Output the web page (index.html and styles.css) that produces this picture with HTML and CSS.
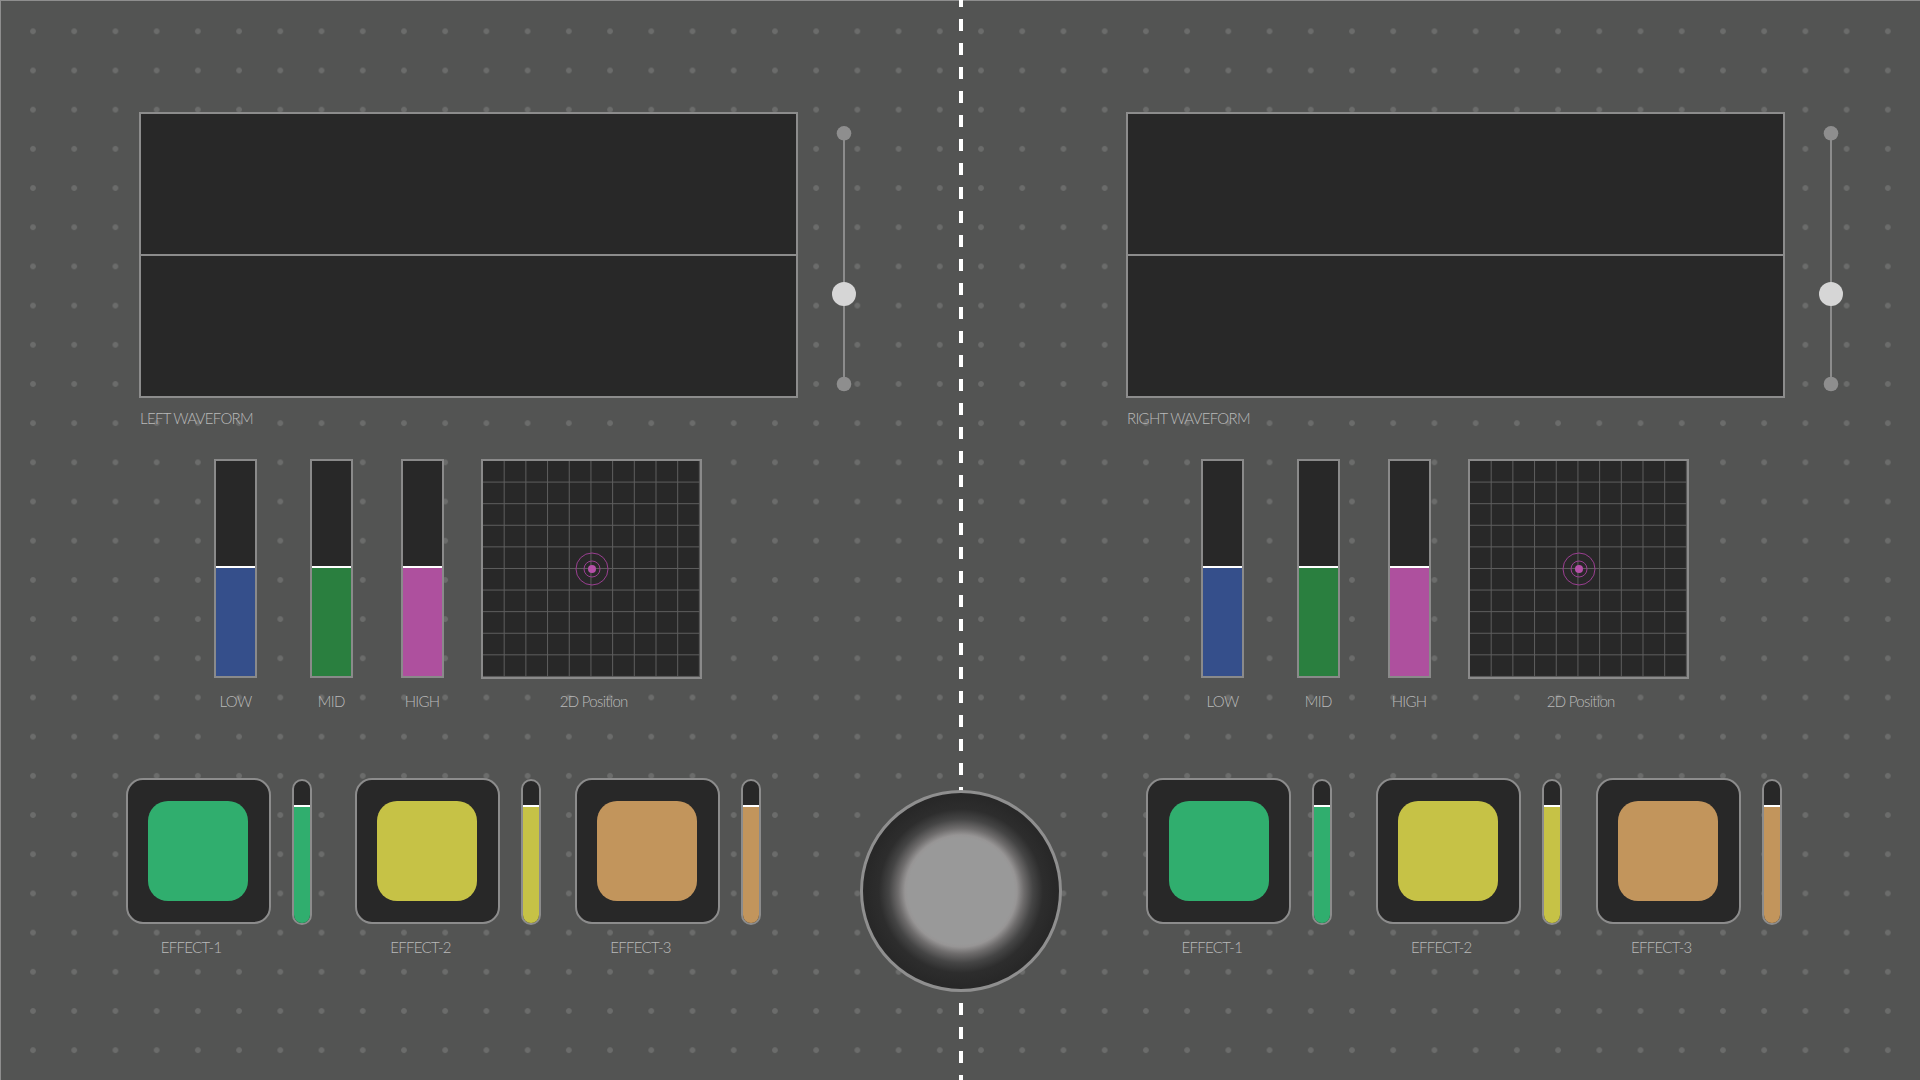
FILE: index.html
```html
<!DOCTYPE html>
<html lang="en">
<head>
<meta charset="utf-8">
<title>Mixer</title>
<link rel="stylesheet" href="styles.css">
</head>
<body>
<div class="stage">
  <div class="divider"></div>

  <div class="decks">
    <section class="deck">
      <div class="wave-row">
        <div class="wave"><div class="wave-half wave-top"></div><div class="wave-half"></div></div>
        <svg class="slider" width="24" height="286" viewBox="0 0 24 286">
          <line x1="12" y1="21" x2="12" y2="272" stroke="#8c8c8c" stroke-width="2"/>
          <circle cx="12" cy="21.3" r="7.3" fill="#8e8e8e"/>
          <circle cx="12" cy="272" r="7.3" fill="#8e8e8e"/>
          <circle cx="12" cy="182" r="12" fill="#d6d6d6"/>
        </svg>
      </div>
      <div class="label wave-label">LEFT WAVEFORM</div>
      <div class="eq-row">
        <div class="eq-item eq-low"><div class="bar"><div class="fill fill-blue"></div></div><div class="label eq-label">LOW</div></div>
        <div class="eq-item eq-mid"><div class="bar"><div class="fill fill-green"></div></div><div class="label eq-label">MID</div></div>
        <div class="eq-item eq-high"><div class="bar"><div class="fill fill-pink"></div></div><div class="label eq-label">HIGH</div></div>
        <div class="eq-item eq-pad">
          <div class="pad">
            <svg class="target" width="40" height="40" viewBox="0 0 40 40">
              <circle cx="20" cy="20" r="16" fill="none" stroke="#9a3f91" stroke-width="1"/>
              <circle cx="20" cy="20" r="8" fill="none" stroke="#9a3f91" stroke-width="1"/>
              <circle cx="20" cy="20" r="4" fill="#b550a8"/>
            </svg>
          </div>
          <div class="label pad-label">2D Position</div>
        </div>
      </div>
    </section>

    <section class="deck">
      <div class="wave-row">
        <div class="wave"><div class="wave-half wave-top"></div><div class="wave-half"></div></div>
        <svg class="slider" width="24" height="286" viewBox="0 0 24 286">
          <line x1="12" y1="21" x2="12" y2="272" stroke="#8c8c8c" stroke-width="2"/>
          <circle cx="12" cy="21.3" r="7.3" fill="#8e8e8e"/>
          <circle cx="12" cy="272" r="7.3" fill="#8e8e8e"/>
          <circle cx="12" cy="182" r="12" fill="#d6d6d6"/>
        </svg>
      </div>
      <div class="label wave-label">RIGHT WAVEFORM</div>
      <div class="eq-row">
        <div class="eq-item eq-low"><div class="bar"><div class="fill fill-blue"></div></div><div class="label eq-label">LOW</div></div>
        <div class="eq-item eq-mid"><div class="bar"><div class="fill fill-green"></div></div><div class="label eq-label">MID</div></div>
        <div class="eq-item eq-high"><div class="bar"><div class="fill fill-pink"></div></div><div class="label eq-label">HIGH</div></div>
        <div class="eq-item eq-pad">
          <div class="pad">
            <svg class="target" width="40" height="40" viewBox="0 0 40 40">
              <circle cx="20" cy="20" r="16" fill="none" stroke="#9a3f91" stroke-width="1"/>
              <circle cx="20" cy="20" r="8" fill="none" stroke="#9a3f91" stroke-width="1"/>
              <circle cx="20" cy="20" r="4" fill="#b550a8"/>
            </svg>
          </div>
          <div class="label pad-label">2D Position</div>
        </div>
      </div>
    </section>
  </div>

  <div class="bottom">
    <div class="fx-group">
      <div class="fx fx-1">
        <div class="fx-col"><div class="fx-box"><div class="fx-pad pad-green"></div></div><div class="label fx-label">EFFECT-1</div></div>
        <div class="meter"><div class="meter-fill pad-green"></div></div>
      </div>
      <div class="fx fx-2">
        <div class="fx-col"><div class="fx-box"><div class="fx-pad pad-yellow"></div></div><div class="label fx-label">EFFECT-2</div></div>
        <div class="meter"><div class="meter-fill pad-yellow"></div></div>
      </div>
      <div class="fx fx-3">
        <div class="fx-col"><div class="fx-box"><div class="fx-pad pad-tan"></div></div><div class="label fx-label">EFFECT-3</div></div>
        <div class="meter"><div class="meter-fill pad-tan"></div></div>
      </div>
    </div>

    <div class="knob"></div>

    <div class="fx-group fx-right">
      <div class="fx fx-1">
        <div class="fx-col"><div class="fx-box"><div class="fx-pad pad-green"></div></div><div class="label fx-label">EFFECT-1</div></div>
        <div class="meter"><div class="meter-fill pad-green"></div></div>
      </div>
      <div class="fx fx-2">
        <div class="fx-col"><div class="fx-box"><div class="fx-pad pad-yellow"></div></div><div class="label fx-label">EFFECT-2</div></div>
        <div class="meter"><div class="meter-fill pad-yellow"></div></div>
      </div>
      <div class="fx fx-3">
        <div class="fx-col"><div class="fx-box"><div class="fx-pad pad-tan"></div></div><div class="label fx-label">EFFECT-3</div></div>
        <div class="meter"><div class="meter-fill pad-tan"></div></div>
      </div>
    </div>
  </div>
</div>
</body>
</html>
```
FILE: styles.css
```css
* { box-sizing: border-box; }

html, body {
  margin: 0;
  padding: 0;
  background: #535453;
}

.stage {
  position: relative;
  width: 1920px;
  height: 1080px;
  overflow: hidden;
  background-color: #535453;
  background-image: radial-gradient(circle at center, #6b6c6b 0, #6b6c6b 2.4px, rgba(107,108,107,0) 3.3px);
  background-size: 41.22px 39.19px;
  background-position: 12.39px 11.7px;
  box-shadow: inset 1px 1px 0 #8e8e8e;
  font-family: "Lato", "Liberation Sans", sans-serif;
  font-weight: 300;
}

.divider {
  position: absolute;
  left: 959px;
  top: 0;
  width: 3.5px;
  height: 1080px;
  background-image: linear-gradient(to bottom, #ffffff 0, #ffffff 50%, rgba(255,255,255,0) 50%);
  background-size: 100% 24px;
  background-position: 0 -5px;
  background-repeat: repeat-y;
}

.label {
  font-size: 15px;
  line-height: 18px;
  letter-spacing: -0.7px;
  color: #bababa;
  white-space: nowrap;
}

/* decks */
.decks {
  display: flex;
  gap: 270px;
  padding-left: 139px;
  padding-top: 112px;
}

.deck {
  width: 717px;
  display: flex;
  flex-direction: column;
}

.wave-row {
  display: flex;
  align-items: flex-start;
  gap: 34px;
}

.wave {
  width: 659px;
  height: 286px;
  border: 2px solid #8c8c8c;
  background: #282828;
  display: flex;
  flex-direction: column;
}

.wave-half { flex: 1; }
.wave-top { border-bottom: 2px solid #8c8c8c; }

.slider { display: block; flex: none; }

.wave-label {
  margin-top: 10.6px;
  padding-left: 1px;
}

.eq-row {
  display: flex;
  align-items: flex-start;
  margin-top: 32.7px;
  padding-left: 75px;
}

.eq-item {
  display: flex;
  flex-direction: column;
  align-items: center;
}

.eq-mid { margin-left: 52.7px; }
.eq-high { margin-left: 47.9px; }
.eq-pad { margin-left: 37.6px; }

.bar {
  width: 43px;
  height: 219px;
  border: 2px solid #8a8a8a;
  background: #282828;
  display: flex;
  flex-direction: column;
  justify-content: flex-end;
}

.fill {
  height: 110px;
  border-top: 2px solid #ffffff;
}
.fill-blue { background: #354f8b; }
.fill-green { background: #2a7f3f; }
.fill-pink { background: #ae509e; }

.eq-label { margin-top: 13.9px; }

.pad {
  position: relative;
  width: 221px;
  height: 220px;
  border: 2px solid #8a8a8a;
  background-color: #282828;
  background-image:
    linear-gradient(to right, #5e5e5e 0, #5e5e5e 1px, rgba(0,0,0,0) 1px),
    linear-gradient(to bottom, #5e5e5e 0, #5e5e5e 1px, rgba(0,0,0,0) 1px);
  background-size: 10% 10%;
  background-position: -1px -1px;
  display: flex;
  align-items: center;
  justify-content: center;
}

.target { display: block; }

.pad-label { margin-top: 13px; padding-left: 4px; }

/* bottom row */
.bottom {
  display: flex;
  align-items: flex-start;
  margin-top: 67.4px;
  padding-left: 125.6px;
}

.fx-group {
  display: flex;
  align-items: flex-start;
}

.fx {
  display: flex;
  align-items: flex-start;
  gap: 21px;
}

.fx-2 { margin-left: 43.4px; }
.fx-3 { margin-left: 34px; }

.fx-col {
  display: flex;
  flex-direction: column;
  align-items: center;
}

.fx-box {
  width: 145px;
  height: 146px;
  border: 2px solid #8c8c8c;
  border-radius: 17px;
  background: #282828;
  display: flex;
  align-items: center;
  justify-content: center;
}

.fx-pad {
  width: 100px;
  height: 100px;
  border-radius: 20px;
}

.pad-green { background: #30ae6e; }
.pad-yellow { background: #c6c246; }
.pad-tan { background: #c2955c; }

.fx-label {
  margin-top: 14.6px;
  margin-right: 14px;
}

.meter {
  width: 20px;
  height: 146px;
  margin-top: 1px;
  border: 2px solid #8c8c8c;
  border-radius: 10px;
  background: #282828;
  overflow: hidden;
  display: flex;
  flex-direction: column;
  justify-content: flex-end;
}

.meter-fill {
  height: 118px;
  border-top: 2px solid #ffffff;
}

.knob {
  position: relative;
  z-index: 2;
  flex: none;
  width: 202px;
  height: 202px;
  margin-top: 12px;
  margin-left: 99px;
  border: 3px solid #8f8f8f;
  border-radius: 50%;
  background: radial-gradient(circle at center, #999999 0, #999999 53px, #979595 56px, #6e6c6c 63px, #454545 72px, #2d2d2d 82px, #282828 95px);
}

.fx-right { margin-left: 84.4px; }
```
